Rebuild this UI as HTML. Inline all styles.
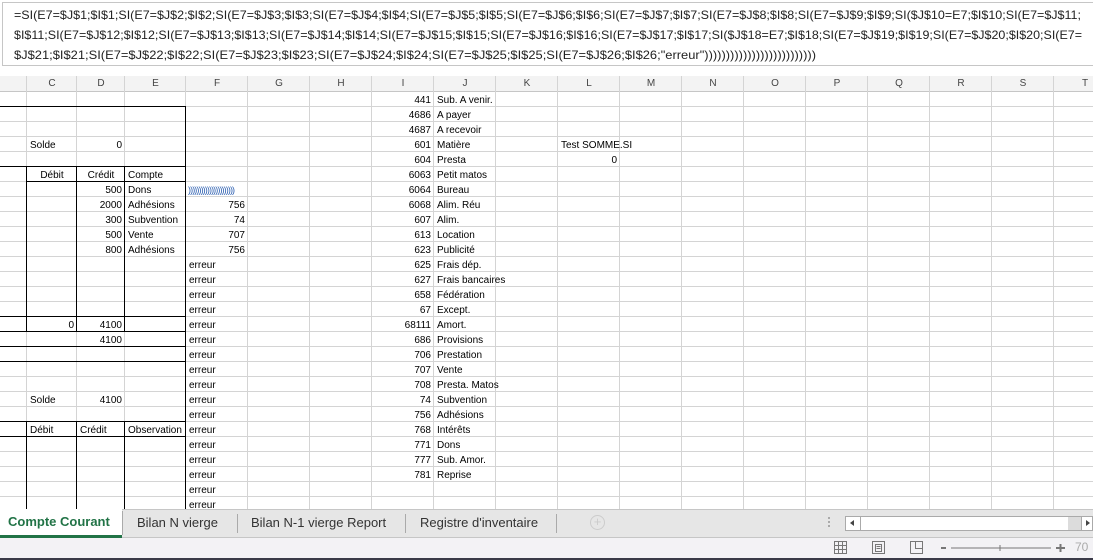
<!DOCTYPE html>
<html><head><meta charset="utf-8"><style>
*{margin:0;padding:0;box-sizing:border-box}
body{width:1093px;height:560px;overflow:hidden;background:#fff;font-family:"Liberation Sans",sans-serif;position:relative}
.a{position:absolute}
.c{position:absolute;font-size:10px;line-height:15px;height:15px;white-space:nowrap;color:#000;margin-top:1px}
.r{text-align:right}
.vl{position:absolute;width:1px;background:#d4d4d4;top:76px;height:433px}
.hd{position:absolute;top:76px;height:16px;font-size:10px;line-height:16px;text-align:center;color:#444}
.bk{position:absolute;background:#000}
</style></head><body>
<div class="a" style="left:0;top:0;width:1093px;height:76px;background:#fff"></div>
<div class="a" style="left:2px;top:2px;width:1093px;height:64px;border:1px solid #c6c6c6;border-right:none;background:#fff"></div>
<svg class="a" style="left:0;top:0" width="1093" height="70">
<g font-family="Liberation Sans, sans-serif" font-size="12" fill="#222">
<text x="14" y="19" textLength="1067" lengthAdjust="spacingAndGlyphs">=SI(E7=$J$1;$I$1;SI(E7=$J$2;$I$2;SI(E7=$J$3;$I$3;SI(E7=$J$4;$I$4;SI(E7=$J$5;$I$5;SI(E7=$J$6;$I$6;SI(E7=$J$7;$I$7;SI(E7=$J$8;$I$8;SI(E7=$J$9;$I$9;SI($J$10=E7;$I$10;SI(E7=$J$11;</text>
<text x="14" y="39" textLength="1068" lengthAdjust="spacingAndGlyphs">$I$11;SI(E7=$J$12;$I$12;SI(E7=$J$13;$I$13;SI(E7=$J$14;$I$14;SI(E7=$J$15;$I$15;SI(E7=$J$16;$I$16;SI(E7=$J$17;$I$17;SI($J$18=E7;$I$18;SI(E7=$J$19;$I$19;SI(E7=$J$20;$I$20;SI(E7=</text>
<text x="14" y="59" textLength="802" lengthAdjust="spacingAndGlyphs">$J$21;$I$21;SI(E7=$J$22;$I$22;SI(E7=$J$23;$I$23;SI(E7=$J$24;$I$24;SI(E7=$J$25;$I$25;SI(E7=$J$26;$I$26;"erreur"))))))))))))))))))))))))))</text>
</g></svg>
<div class="a" style="left:0;top:76px;width:1093px;height:16px;background:#f3f3f3;border-bottom:1px solid #c6c6c6"></div>
<div class="a" style="left:0;top:92px;width:1093px;height:417px;background:repeating-linear-gradient(to bottom,transparent 0,transparent 14px,#d4d4d4 14px,#d4d4d4 15px)"></div>
<div class="vl" style="left:26px"></div><div class="vl" style="left:76px"></div><div class="vl" style="left:124px"></div><div class="vl" style="left:185px"></div><div class="vl" style="left:247px"></div><div class="vl" style="left:309px"></div><div class="vl" style="left:371px"></div><div class="vl" style="left:433px"></div><div class="vl" style="left:495px"></div><div class="vl" style="left:557px"></div><div class="vl" style="left:619px"></div><div class="vl" style="left:681px"></div><div class="vl" style="left:743px"></div><div class="vl" style="left:805px"></div><div class="vl" style="left:867px"></div><div class="vl" style="left:929px"></div><div class="vl" style="left:991px"></div><div class="vl" style="left:1053px"></div>
<div class="hd" style="left:27px;width:50px">C</div><div class="hd" style="left:77px;width:48px">D</div><div class="hd" style="left:125px;width:61px">E</div><div class="hd" style="left:186px;width:62px">F</div><div class="hd" style="left:248px;width:62px">G</div><div class="hd" style="left:310px;width:62px">H</div><div class="hd" style="left:372px;width:62px">I</div><div class="hd" style="left:434px;width:62px">J</div><div class="hd" style="left:496px;width:62px">K</div><div class="hd" style="left:558px;width:62px">L</div><div class="hd" style="left:620px;width:62px">M</div><div class="hd" style="left:682px;width:62px">N</div><div class="hd" style="left:744px;width:62px">O</div><div class="hd" style="left:806px;width:62px">P</div><div class="hd" style="left:868px;width:62px">Q</div><div class="hd" style="left:930px;width:62px">R</div><div class="hd" style="left:992px;width:62px">S</div><div class="hd" style="left:1054px;width:62px">T</div>
<div class="bk" style="left:0;top:106px;width:186px;height:1px"></div>
<div class="bk" style="left:185px;top:106px;width:1px;height:403px"></div>
<div class="bk" style="left:0;top:166px;width:186px;height:1px"></div>
<div class="bk" style="left:27px;top:181px;width:159px;height:1px"></div>
<div class="bk" style="left:26px;top:166px;width:1px;height:166px"></div>
<div class="bk" style="left:76px;top:166px;width:1px;height:166px"></div>
<div class="bk" style="left:124px;top:166px;width:1px;height:166px"></div>
<div class="bk" style="left:0;top:316px;width:186px;height:1px"></div>
<div class="bk" style="left:0;top:331px;width:186px;height:1px"></div>
<div class="bk" style="left:0;top:346px;width:186px;height:1px"></div>
<div class="bk" style="left:0;top:361px;width:186px;height:1px"></div>
<div class="bk" style="left:0;top:421px;width:186px;height:1px"></div>
<div class="bk" style="left:0;top:436px;width:186px;height:1px"></div>
<div class="bk" style="left:26px;top:421px;width:1px;height:88px"></div>
<div class="bk" style="left:76px;top:421px;width:1px;height:88px"></div>
<div class="bk" style="left:124px;top:421px;width:1px;height:88px"></div>
<div class="c" style="left:30px;top:137px">Solde</div><div class="c r" style="left:77px;width:45px;top:137px">0</div>
<div class="c" style="left:27px;width:50px;top:167px;text-align:center">Débit</div><div class="c" style="left:77px;width:48px;top:167px;text-align:center">Crédit</div><div class="c" style="left:128px;top:167px">Compte</div>
<div class="c r" style="left:77px;width:45px;top:182px">500</div><div class="c" style="left:128px;top:182px">Dons</div>
<div class="c" style="left:188px;top:182px;color:#2a5db0;font-size:9px;letter-spacing:-0.9px">))))))))))))))))))))))</div>
<div class="c r" style="left:77px;width:45px;top:197px">2000</div><div class="c" style="left:128px;top:197px">Adhésions</div><div class="c r" style="left:186px;width:59px;top:197px">756</div>
<div class="c r" style="left:77px;width:45px;top:212px">300</div><div class="c" style="left:128px;top:212px">Subvention</div><div class="c r" style="left:186px;width:59px;top:212px">74</div>
<div class="c r" style="left:77px;width:45px;top:227px">500</div><div class="c" style="left:128px;top:227px">Vente</div><div class="c r" style="left:186px;width:59px;top:227px">707</div>
<div class="c r" style="left:77px;width:45px;top:242px">800</div><div class="c" style="left:128px;top:242px">Adhésions</div><div class="c r" style="left:186px;width:59px;top:242px">756</div>
<div class="c r" style="left:27px;width:47px;top:317px">0</div><div class="c r" style="left:77px;width:45px;top:317px">4100</div>
<div class="c r" style="left:77px;width:45px;top:332px">4100</div>
<div class="c" style="left:30px;top:392px">Solde</div><div class="c r" style="left:77px;width:45px;top:392px">4100</div>
<div class="c" style="left:30px;top:422px">Débit</div><div class="c" style="left:80px;top:422px">Crédit</div><div class="c" style="left:128px;top:422px">Observation</div>
<div class="c" style="left:189px;top:257px;line-height:15px;white-space:pre">erreur
erreur
erreur
erreur
erreur
erreur
erreur
erreur
erreur
erreur
erreur
erreur
erreur
erreur
erreur
erreur
erreur</div>
<div class="c r" style="left:372px;width:59px;top:92px;white-space:pre">441
4686
4687
601
604
6063
6064
6068
607
613
623
625
627
658
67
68111
686
706
707
708
74
756
768
771
777
781</div>
<div class="c" style="left:437px;top:92px;white-space:pre">Sub. A venir.
A payer
A recevoir
Matière
Presta
Petit matos
Bureau
Alim. Réu
Alim.
Location
Publicité
Frais dép.
Frais bancaires
Fédération
Except.
Amort.
Provisions
Prestation
Vente
Presta. Matos
Subvention
Adhésions
Intérêts
Dons
Sub. Amor.
Reprise</div>
<div class="c" style="left:561px;top:137px">Test SOMME.SI</div>
<div class="c r" style="left:558px;width:59px;top:152px">0</div>
<div class="a" style="left:0;top:509px;width:1093px;height:29px;background:#e6e6e6;border-top:1px solid #c6c6c6;border-bottom:1px solid #c6c6c6"></div>
<div class="a" style="left:0;top:509px;width:122px;height:29px;background:#fff;border-bottom:3px solid #217346"></div>
<div class="a" style="left:8px;top:514px;font-size:13px;font-weight:bold;color:#217346">Compte Courant</div>
<div class="a" style="left:137px;top:515px;font-size:13px;color:#333">Bilan N vierge</div>
<div class="a" style="left:251px;top:515px;font-size:13px;color:#333">Bilan N-1 vierge Report</div>
<div class="a" style="left:420px;top:515px;font-size:13px;color:#333">Registre d'inventaire</div>
<div class="a" style="left:122px;top:511px;width:1px;height:24px;background:#aaa"></div>
<div class="a" style="left:237px;top:514px;width:1px;height:19px;background:#aaa"></div>
<div class="a" style="left:405px;top:514px;width:1px;height:19px;background:#aaa"></div>
<div class="a" style="left:556px;top:514px;width:1px;height:19px;background:#aaa"></div>
<div class="a" style="left:590px;top:515px;width:15px;height:15px;border:1px solid #ccc;border-radius:50%;color:#ccc;font-size:13px;line-height:12px;text-align:center">+</div>
<div class="a" style="left:828px;top:517px;width:2px;height:2px;background:#aaa;box-shadow:0 4px #aaa,0 8px #aaa"></div>
<div class="a" style="left:845px;top:516px;width:248px;height:15px;background:#fff;border:1px solid #aaa"></div>
<div class="a" style="left:860px;top:516px;width:1px;height:15px;background:#aaa"></div>
<div class="a" style="left:1068px;top:517px;width:13px;height:13px;background:#dcdcdc"></div>
<div class="a" style="left:1081px;top:516px;width:1px;height:15px;background:#aaa"></div>
<div class="a" style="left:850px;top:520px;width:0;height:0;border-top:3px solid transparent;border-bottom:3px solid transparent;border-right:4px solid #444"></div>
<div class="a" style="left:1086px;top:520px;width:0;height:0;border-top:3px solid transparent;border-bottom:3px solid transparent;border-left:4px solid #444"></div>
<div class="a" style="left:0;top:538px;width:1093px;height:20px;background:#f3f2f5"></div>
<div class="a" style="left:0;top:558px;width:1093px;height:2px;background:#3a3a48"></div>
<svg class="a" style="left:830px;top:540px" width="263" height="16" fill="none" stroke="#777" stroke-width="1">
<rect x="4.5" y="1.5" width="12" height="12"/><path d="M8.5 1.5v12M12.5 1.5v12M4.5 5.5h12M4.5 9.5h12"/>
<rect x="42.5" y="1.5" width="12" height="12"/><rect x="45.5" y="4.5" width="6" height="7"/><path d="M46.5 6.5h4M46.5 8.5h4"/>
<path d="M80.5 13.5v-12h12v12h-12M85.5 1.5v7h7"/>
<path d="M111 8h5" stroke-width="2"/><path d="M121 8h100M170 5v6"/><path d="M226 8h9M230.5 4v8" stroke-width="2"/>
</svg>
<div class="a" style="left:1075px;top:540px;font-size:12px;color:#aaa">70</div>
</body></html>
